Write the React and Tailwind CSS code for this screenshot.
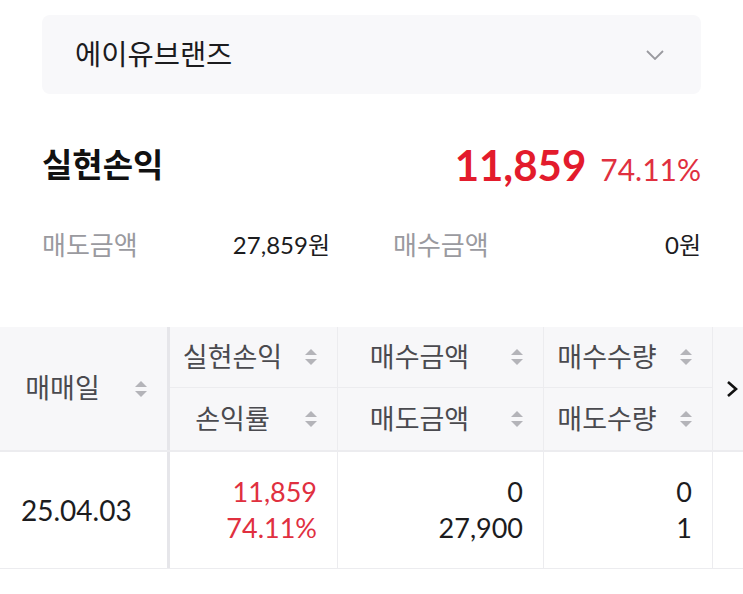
import React from "react";

const FONT = { fontFamily: 'Lato, "Noto Sans CJK KR", sans-serif' };

const SortIcon = () => (
    <svg width="12" height="18" viewBox="0 0 12 18" className="shrink-0">
        <polygon points="0,7 6,1 12,7" fill="#b4b4b9" />
        <polygon points="0,11 6,17 12,11" fill="#b4b4b9" />
    </svg>
);

const HeadCell = ({ label, className = "" }) => (
    <div className={`flex items-center pr-[20px] ${className}`}>
        <span className="flex-1 mr-[10px] text-center text-[27px] text-[#4a4a4f]">{label}</span>
        <SortIcon />
    </div>
);

const pairs = [
    { top: "실현손익", bottom: "손익률", w: "w-[168px]" },
    { top: "매수금액", bottom: "매도금액", w: "w-[206px]" },
    { top: "매수수량", bottom: "매도수량", w: "w-[169px]" },
];

const App = () => {
    return (
        <div className="w-[743px] h-[594px] bg-white overflow-hidden" style={FONT}>
            <div className="px-[42px] pt-[15px]">
                <div className="h-[79px] rounded-lg bg-[#f8f8fa] flex items-center justify-between pl-[33px] pr-[37px]">
                    <span className="text-[28.5px] text-[#1c1c1e]">에이유브랜즈</span>
                    <svg width="18" height="10" viewBox="0 0 18 10">
                        <polyline points="1,1 9,9 17,1" fill="none" stroke="#9a9a9f" strokeWidth="1.8" />
                    </svg>
                </div>

                <div className="mt-[41px] h-[60px] flex items-center justify-between">
                    <span className="text-[33px] font-bold text-[#111]">실현손익</span>
                    <div className="flex items-baseline gap-[14px]">
                        <span className="text-[42px] font-bold text-[#e31b2c]">11,859</span>
                        <span className="text-[30px] text-[#e0303f]">74.11%</span>
                    </div>
                </div>

                <div className="mt-[30px] h-[40px] flex items-center text-[24px]">
                    <div className="w-[288px] flex justify-between items-center">
                        <span className="text-[26px] text-[#9a9a9f]">매도금액</span>
                        <span className="text-[#1c1c1e]">27,859원</span>
                    </div>
                    <div className="ml-[63px] flex-1 flex justify-between items-center">
                        <span className="text-[26px] text-[#9a9a9f]">매수금액</span>
                        <span className="text-[#1c1c1e]">0원</span>
                    </div>
                </div>
            </div>

            <div className="relative mt-[62px]">
                <div className="flex bg-[#f7f7f9] border-b-2 border-[#ececef]">
                    <div className="w-[170px] h-[123px] border-r-[3px] border-[#e6e6ea] flex">
                        <HeadCell label="매매일" className="flex-1" />
                    </div>
                    {pairs.map((p) => (
                        <div key={p.top} className={`${p.w} border-r border-[#ececef] flex flex-col`}>
                            <HeadCell label={p.top} className="h-[61px] border-b border-[#ececef]" />
                            <HeadCell label={p.bottom} className="h-[62px]" />
                        </div>
                    ))}
                    <div className="flex-1" />
                </div>

                <div className="flex h-[117px] border-b border-[#ececef] text-[27px] text-[#1c1c1e]">
                    <div className="w-[170px] border-r-[3px] border-[#e6e6ea] flex items-center pl-[21px] text-[28px]">
                        25.04.03
                    </div>
                    <div className="w-[168px] border-r border-[#ececef] flex flex-col justify-center items-end pr-[20px] leading-[36px] text-[#e0303f]">
                        <span>11,859</span>
                        <span>74.11%</span>
                    </div>
                    <div className="w-[206px] border-r border-[#ececef] flex flex-col justify-center items-end pr-[20px] leading-[36px]">
                        <span>0</span>
                        <span>27,900</span>
                    </div>
                    <div className="w-[169px] border-r border-[#ececef] flex flex-col justify-center items-end pr-[20px] leading-[36px]">
                        <span>0</span>
                        <span>1</span>
                    </div>
                    <div className="flex-1" />
                </div>

                <svg
                    width="12"
                    height="18"
                    viewBox="0 0 12 18"
                    className="absolute left-[726px] top-[53px]"
                >
                    <polyline points="2,2 10,9 2,16" fill="none" stroke="#111" strokeWidth="2.6" />
                </svg>
            </div>
        </div>
    );
};

export default App;
